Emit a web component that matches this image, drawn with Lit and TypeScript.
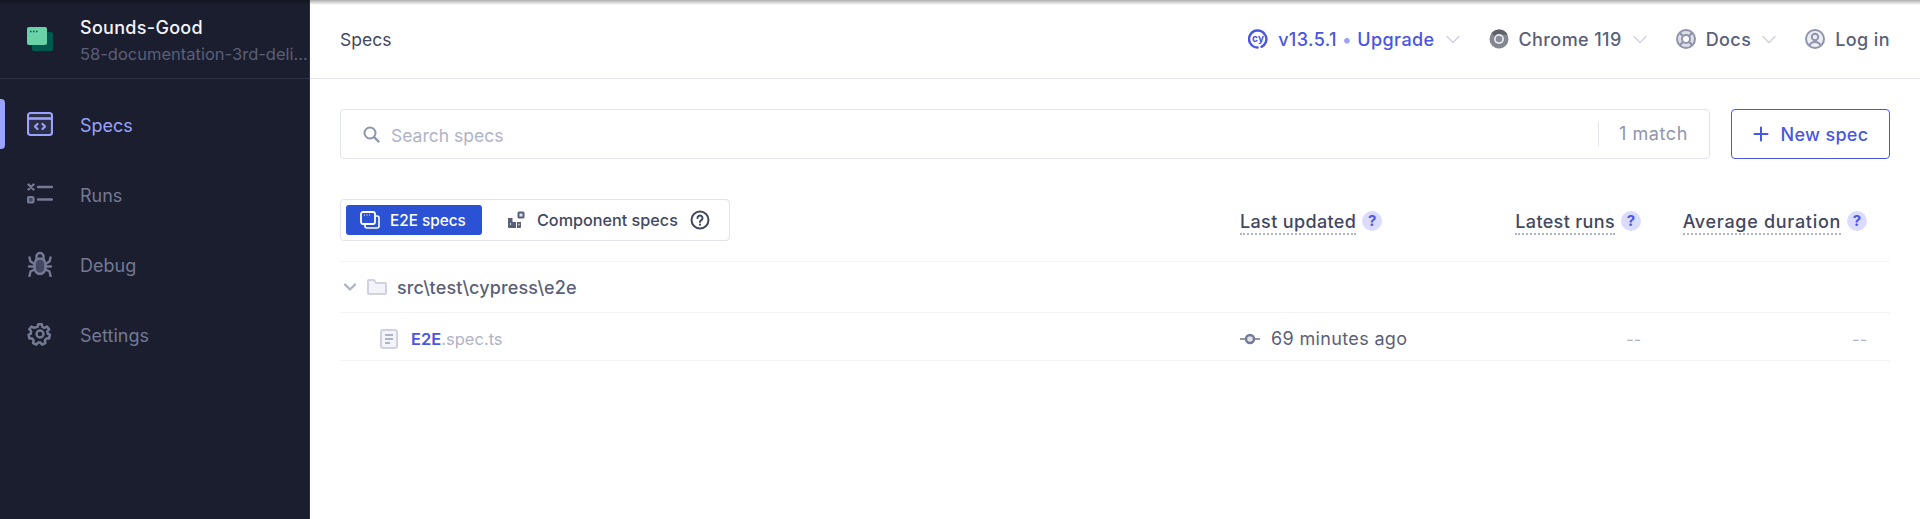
import { LitElement, html, css, svg } from 'lit';
import { customElement } from 'lit/decorators.js';

const chevron = html`<svg class="chev" width="16" height="16" viewBox="0 0 16 16" fill="none"><path d="M2 5.500l6 6 6-6" stroke="currentColor" stroke-width="1.500" stroke-linecap="round" stroke-linejoin="round"/></svg>`;

const navIcons: Record<string, unknown> = {
  specs: svg`<rect x="1" y="2" width="24" height="22" rx="2.500" fill="#9aa2fc" fill-opacity=".12" stroke="currentColor" stroke-width="2.200"/><path d="M1 7.500h24" stroke="currentColor" stroke-width="2.600"/><path d="M10.500 13l-2.500 2.500 2.500 2.500M15.500 13l2.500 2.500-2.500 2.500" stroke="currentColor" stroke-width="2.200" stroke-linecap="round" stroke-linejoin="round"/>`,
  runs: svg`<path d="M1.500 3.500l5 5M6.500 3.500l-5 5" stroke="currentColor" stroke-width="2.400" stroke-linecap="round"/><rect x="1" y="16" width="5.500" height="5.500" rx="1" fill="#434861" stroke="currentColor" stroke-width="2.200"/><path d="M11 6h14M11 18.500h14" stroke="currentColor" stroke-width="2.400" stroke-linecap="round"/>`,
  debug: svg`<path d="M7.500 13c0-3 2.500-5.500 5.500-5.500s5.500 2.500 5.500 5.500v4c0 3-2.500 6-5.500 6s-5.500-3-5.500-6z" fill="#434861" stroke="currentColor" stroke-width="2.400"/><path d="M9.500 8V5.500a3.500 3.500 0 017 0V8M2.500 6.500l1 4 4 2.500M23.500 6.500l-1 4-4 2.500M2 15.500h5.500M24 15.500h-5.500M2.500 25l1-4.500 4-2M23.500 25l-1-4.500-4-2" fill="none" stroke="currentColor" stroke-width="2.400" stroke-linecap="round" stroke-linejoin="round"/>`,
  settings: svg`<path d="M11 2.500h4l.6 3 2.400 1.100 2.700-1.500 2.500 3-2 2.300.3 2.600 2.500 1.500-1 3.800-3 .2-1.600 2.100.6 3-3.600 1.700-1.900-2.400h-2.600L8.900 25.300l-3.600-1.700.6-3-1.600-2.100-3-.2-1-3.800 2.500-1.500.3-2.600-2-2.300 2.500-3 2.700 1.500L10.400 5.500z" transform="translate(1.300 .9) scale(.9)" fill="none" stroke="currentColor" stroke-width="2.800" stroke-linejoin="round"/><circle cx="13" cy="13" r="3.500" fill="none" stroke="currentColor" stroke-width="2.400"/>`,
};

const helpBadge = html`<span class="badge">?</span>`;

@customElement('app-root')
export class AppRoot extends LitElement {
  static styles = css`
    :host {
      display: block;
      height: 519px;
      position: relative;
      overflow: hidden;
      font-family: Inter, 'Noto Sans', sans-serif;
      font-size: 18px;
      color: #434861;
      background: #fff;
    }
    .shell { display: flex; height: 100%; }

    /* sidebar */
    .side {
      width: 310px;
      flex: none;
      background: #1b1e2e;
      border-right: 1px solid #2e3247;
      box-sizing: border-box;
    }
    .proj {
      height: 79px;
      box-sizing: border-box;
      display: flex;
      align-items: center;
      gap: 27px;
      padding-left: 27px;
      border-bottom: 1px solid #2e3247;
    }
    .proj-text { min-width: 0; display: flex; flex-direction: column; gap: 4px; padding-top: 2px; }
    .proj-name { color: #f3f4fa; font-size: 18px; line-height: 24px; font-weight: 500; letter-spacing: .3px; }
    .proj-branch { color: #5a5f7a; font-size: 16.500px; line-height: 20px; white-space: nowrap; }
    .nav { display: flex; flex-direction: column; gap: 20px; padding-top: 20px; }
    .nav-item {
      height: 50px;
      display: flex;
      align-items: center;
      gap: 27px;
      padding-left: 27px;
      color: #747994;
      position: relative;
    }
    .nav-item span { padding-top: 2px; }
    .nav-item.active { color: #9aa2fc; }
    .nav-item.active::before {
      content: '';
      position: absolute;
      left: 0;
      top: 0;
      width: 5px;
      height: 50px;
      border-radius: 0 4px 4px 0;
      background: #9aa2fc;
    }

    /* main */
    .main { flex: 1; min-width: 0; }
    .top {
      height: 79px;
      box-sizing: border-box;
      border-bottom: 1px solid #e1e3ed;
      display: flex;
      align-items: center;
      padding: 0 30px;
    }
    .crumb { color: #434861; flex: 1; font-size: 17.500px; }
    .top-links { display: flex; align-items: center; gap: 28px; color: #5a5f7a; font-weight: 500; letter-spacing: .4px; }
    .link { display: flex; align-items: center; gap: 10px; }
    .link.up { color: #4956e3; }
    .dot { color: #9aa2fc; }
    .chev { color: #d0d2e0; }

    .content { padding: 30px 30px 0; }
    .search-row { display: flex; gap: 21px; }
    .search {
      flex: 1;
      height: 50px;
      box-sizing: border-box;
      border: 1px solid #e1e3ed;
      border-radius: 4px;
      display: flex;
      align-items: center;
      padding: 0 21px;
      gap: 11px;
    }
    .placeholder { flex: 1; color: #afb3c7; font-size: 17.500px; padding-top: 2px; }
    .match {
      color: #9095ad;
      border-left: 1px solid #e1e3ed;
      padding-left: 20px;
      line-height: 24px;
      letter-spacing: .6px;
    }
    .new {
      width: 159px;
      height: 50px;
      box-sizing: border-box;
      border: 1px solid #4956e3;
      border-radius: 4px;
      color: #4956e3;
      font-weight: 500;
      letter-spacing: .3px;
      display: flex;
      align-items: center;
      justify-content: center;
      gap: 12px;
    }

    .grid {
      display: grid;
      grid-template-columns: 900px 240px 161px 226px;
      padding-right: 23px;
      align-items: center;
    }
    .head { margin-top: 40px; padding-bottom: 20px; border-bottom: 1px solid #f3f4fa; }
    .tabs {
      width: 390px;
      height: 42px;
      box-sizing: border-box;
      border: 1px solid #e1e3ed;
      border-radius: 4px;
      padding: 5px;
      display: flex;
      align-items: center;
      font-weight: 500;
    }
    .tab { height: 30px; display: flex; align-items: center; gap: 10px; }
    .tab.on {
      width: 136px;
      box-sizing: border-box;
      padding-left: 14px;
      background: #2b52d4;
      color: #fff;
      border-radius: 3px;
      font-size: 15.300px;
    }
    .tab.off { padding-left: 25px; color: #434861; gap: 12px; font-size: 16.200px; }
    .col {
      display: flex;
      align-items: center;
      gap: 6px;
      color: #434861;
      font-weight: 500;
      white-space: nowrap;
      padding-top: 5px;
      letter-spacing: .35px;
    }
    .col.end { justify-content: flex-end; }
    .col-label { border-bottom: 2px dotted #afb3c7; line-height: 22px; }
    .col-label.wide { letter-spacing: .7px; }
    .badge {
      width: 20px;
      height: 20px;
      border-radius: 50%;
      background: #dadbfe;
      color: #4956e3;
      font-size: 15px;
      font-weight: 700;
      letter-spacing: 0;
      display: inline-flex;
      align-items: center;
      justify-content: center;
      margin-top: -4px;
    }

    .row { height: 50px; border-bottom: 1px solid #f3f4fa; }
    .row.file { height: 43px; padding-top: 4px; }
    .cell-name { display: flex; align-items: center; }
    .folder { gap: 10px; color: #5a5f7a; font-weight: 500; padding-left: 3px; letter-spacing: .15px; }
    .spec { padding-left: 40px; gap: 13px; font-size: 16.500px; }
    .spec-name { color: #afb3c7; }
    .spec-name b { color: #4956e3; font-weight: 600; }
    .updated { display: flex; align-items: center; gap: 11px; color: #5a5f7a; letter-spacing: .35px; }
    .none { color: #afb3c7; text-align: right; font-size: 16px; }

    .top-shade {
      position: absolute;
      left: 0;
      right: 0;
      top: 0;
      height: 5px;
      background: linear-gradient(rgba(0, 0, 0, .32), rgba(0, 0, 0, 0));
      pointer-events: none;
    }
  `;

  renderNav(id: string, label: string, active = false) {
    return html`<div class="nav-item ${active ? 'active' : ''}">
      <svg width="26" height="26" viewBox="0 0 26 26" fill="none">${navIcons[id]}</svg>
      <span>${label}</span>
    </div>`;
  }

  render() {
    return html`
      <div class="shell">
        <aside class="side">
          <div class="proj">
            <svg width="26" height="24" viewBox="0 0 26 24">
              <rect x="5" y="5" width="21" height="19" rx="2" fill="#00594f"/>
              <rect x="0" y="0" width="20" height="18" rx="2" fill="#69d3a7"/>
              <path d="M3 4.500h1.500M6 4.500h1.500M9 4.500h1.500" stroke="#00594f" stroke-width="1.500"/>
            </svg>
            <div class="proj-text">
              <div class="proj-name">Sounds-Good</div>
              <div class="proj-branch">58-documentation-3rd-deli...</div>
            </div>
          </div>
          <nav class="nav">
            ${this.renderNav('specs', 'Specs', true)}
            ${this.renderNav('runs', 'Runs')}
            ${this.renderNav('debug', 'Debug')}
            ${this.renderNav('settings', 'Settings')}
          </nav>
        </aside>
        <main class="main">
          <header class="top">
            <div class="crumb">Specs</div>
            <div class="top-links">
              <div class="link up">
                <svg width="20" height="20" viewBox="0 0 20 20" fill="none">
                  <path d="M16.800 5.500A8.500 8.500 0 1 0 9.500 18.500" stroke="currentColor" stroke-width="2.400" stroke-linecap="round"/>
                  <path d="M17.800 7A8.500 8.500 0 0 1 13.500 17.800" stroke="currentColor" stroke-width="2.400" stroke-linecap="round"/>
                  <text x="4" y="13" font-size="10" font-weight="700" font-family="Inter" fill="currentColor">cy</text>
                </svg>
                <span>v13.5.1 <span class="dot">•</span> Upgrade</span>
                ${chevron}
              </div>
              <div class="link">
                <svg width="20" height="20" viewBox="0 0 20 20">
                  <circle cx="10" cy="10" r="9.500" fill="#85878f"/>
                  <path d="M10 .5a9.500 9.500 0 0 1 8.500 5.300H10A4.500 4.500 0 0 0 6 8L2.700 4A9.500 9.500 0 0 1 10 .5z" fill="#5f6169"/>
                  <circle cx="10" cy="10" r="5" fill="#e8e9ee"/>
                  <circle cx="10" cy="10" r="3.300" fill="#8b8d97"/>
                </svg>
                <span>Chrome 119</span>
                ${chevron}
              </div>
              <div class="link">
                <svg width="20" height="20" viewBox="0 0 20 20" fill="none">
                  <circle cx="10" cy="10" r="6.500" stroke="#9095ad" stroke-width="6" stroke-opacity=".3"/>
                  <circle cx="10" cy="10" r="9" stroke="#9095ad" stroke-width="2"/>
                  <circle cx="10" cy="10" r="4" stroke="#9095ad" stroke-width="2"/>
                  <path d="M3.600 3.600l3.600 3.600M16.400 3.600l-3.600 3.600M3.600 16.400l3.600-3.600M16.400 16.400l-3.600-3.600" stroke="#9095ad" stroke-width="2.200"/>
                </svg>
                <span>Docs</span>
                ${chevron}
              </div>
              <div class="link">
                <svg width="20" height="20" viewBox="0 0 20 20" fill="none">
                  <circle cx="10" cy="10" r="9" fill="#9095ad" fill-opacity=".15" stroke="#9095ad" stroke-width="2"/>
                  <circle cx="10" cy="8" r="3.200" stroke="#9095ad" stroke-width="2"/>
                  <path d="M4.500 16.500c1-2.500 3-3.500 5.500-3.500s4.500 1 5.500 3.500" stroke="#9095ad" stroke-width="2"/>
                </svg>
                <span>Log in</span>
              </div>
            </div>
          </header>

          <div class="content">
            <div class="search-row">
              <div class="search">
                <svg width="18" height="18" viewBox="0 0 18 18" fill="none">
                  <circle cx="8" cy="8" r="5.500" stroke="#9095ad" stroke-width="2"/>
                  <path d="M12.500 12.500l4 4" stroke="#9095ad" stroke-width="2.400" stroke-linecap="round"/>
                </svg>
                <span class="placeholder">Search specs</span>
                <span class="match">1 match</span>
              </div>
              <div class="new">
                <svg width="16" height="16" viewBox="0 0 16 16" fill="none"><path d="M8 1.500v13M1.500 8h13" stroke="currentColor" stroke-width="2" stroke-linecap="round"/></svg>
                <span>New spec</span>
              </div>
            </div>

            <div class="grid head">
              <div class="tabs">
                <div class="tab on">
                  <svg width="20" height="18" viewBox="0 0 20 18" fill="none">
                    <rect x="5" y="5" width="14" height="12" rx="2" stroke="#fff" stroke-width="1.600"/>
                    <rect x="1" y="1" width="14" height="12" rx="2" fill="#2b52d4" stroke="#fff" stroke-width="1.800"/>
                    <path d="M4 4h1M6.500 4h1M9 4h1" stroke="#fff" stroke-width="1"/>
                  </svg>
                  <span>E2E specs</span>
                </div>
                <div class="tab off">
                  <svg width="18" height="18" viewBox="0 0 18 18">
                    <path d="M1 7h4.500v4H9v6H2a1 1 0 0 1-1-1zM10 11h4v5a1 1 0 0 1-1 1h-3z" fill="#5a5f7a"/>
                    <rect x="1" y="12" width="4" height="4" fill="#5a5f7a"/>
                    <path d="M3 13h1M11.500 13.500h1" stroke="#fff" stroke-width="1.500"/>
                    <rect x="11.500" y="1.500" width="5" height="5" rx=".5" fill="#e1e3ed" stroke="#5a5f7a" stroke-width="2"/>
                  </svg>
                  <span>Component specs</span>
                  <svg width="20" height="20" viewBox="0 0 20 20" fill="none">
                    <circle cx="10" cy="10" r="8.500" stroke="#434861" stroke-width="2"/>
                    <path d="M7.500 8a2.500 2.500 0 1 1 3.800 2.100c-.8.500-1.300 1-1.300 1.900" stroke="#434861" stroke-width="2" stroke-linecap="round"/>
                    <circle cx="10" cy="14.700" r="1.100" fill="#434861"/>
                  </svg>
                </div>
              </div>
              <div class="col"><span class="col-label">Last updated</span>${helpBadge}</div>
              <div class="col end"><span class="col-label">Latest runs</span>${helpBadge}</div>
              <div class="col end"><span class="col-label wide">Average duration</span>${helpBadge}</div>
            </div>

            <div class="grid row">
              <div class="cell-name folder">
                <svg width="14" height="14" viewBox="0 0 14 14" fill="none"><path d="M2 4.500l5 5 5-5" stroke="#afb3c7" stroke-width="2.400" stroke-linecap="round" stroke-linejoin="round"/></svg>
                <svg width="20" height="18" viewBox="0 0 20 18" fill="none"><path d="M1 3a1 1 0 0 1 1-1h5l2 3h9a1 1 0 0 1 1 1v9a1 1 0 0 1-1 1H2a1 1 0 0 1-1-1z" fill="#f3f4fa" stroke="#d0d2e0" stroke-width="2" stroke-linejoin="round"/></svg>
                <span>src\\test\\cypress\\e2e</span>
              </div>
            </div>

            <div class="grid row file">
              <div class="cell-name spec">
                <svg width="18" height="20" viewBox="0 0 18 20" fill="none">
                  <rect x="1" y="1" width="16" height="18" rx="2" fill="#f3f4fa" stroke="#d0d2e0" stroke-width="2"/>
                  <path d="M5 6h8M5 10h8M5 14h5" stroke="#afb3c7" stroke-width="1.800"/>
                </svg>
                <span class="spec-name"><b>E2E</b>.spec.ts</span>
              </div>
              <div class="updated">
                <svg width="20" height="12" viewBox="0 0 20 12" fill="none">
                  <path d="M0 6h5M15 6h5" stroke="#9095ad" stroke-width="2"/>
                  <circle cx="10" cy="6" r="4" fill="#e1e3ed" stroke="#747994" stroke-width="2.400"/>
                </svg>
                <span>69 minutes ago</span>
              </div>
              <div class="none">--</div>
              <div class="none">--</div>
            </div>
          </div>
        </main>
      </div>
      <div class="top-shade"></div>
    `;
  }
}
